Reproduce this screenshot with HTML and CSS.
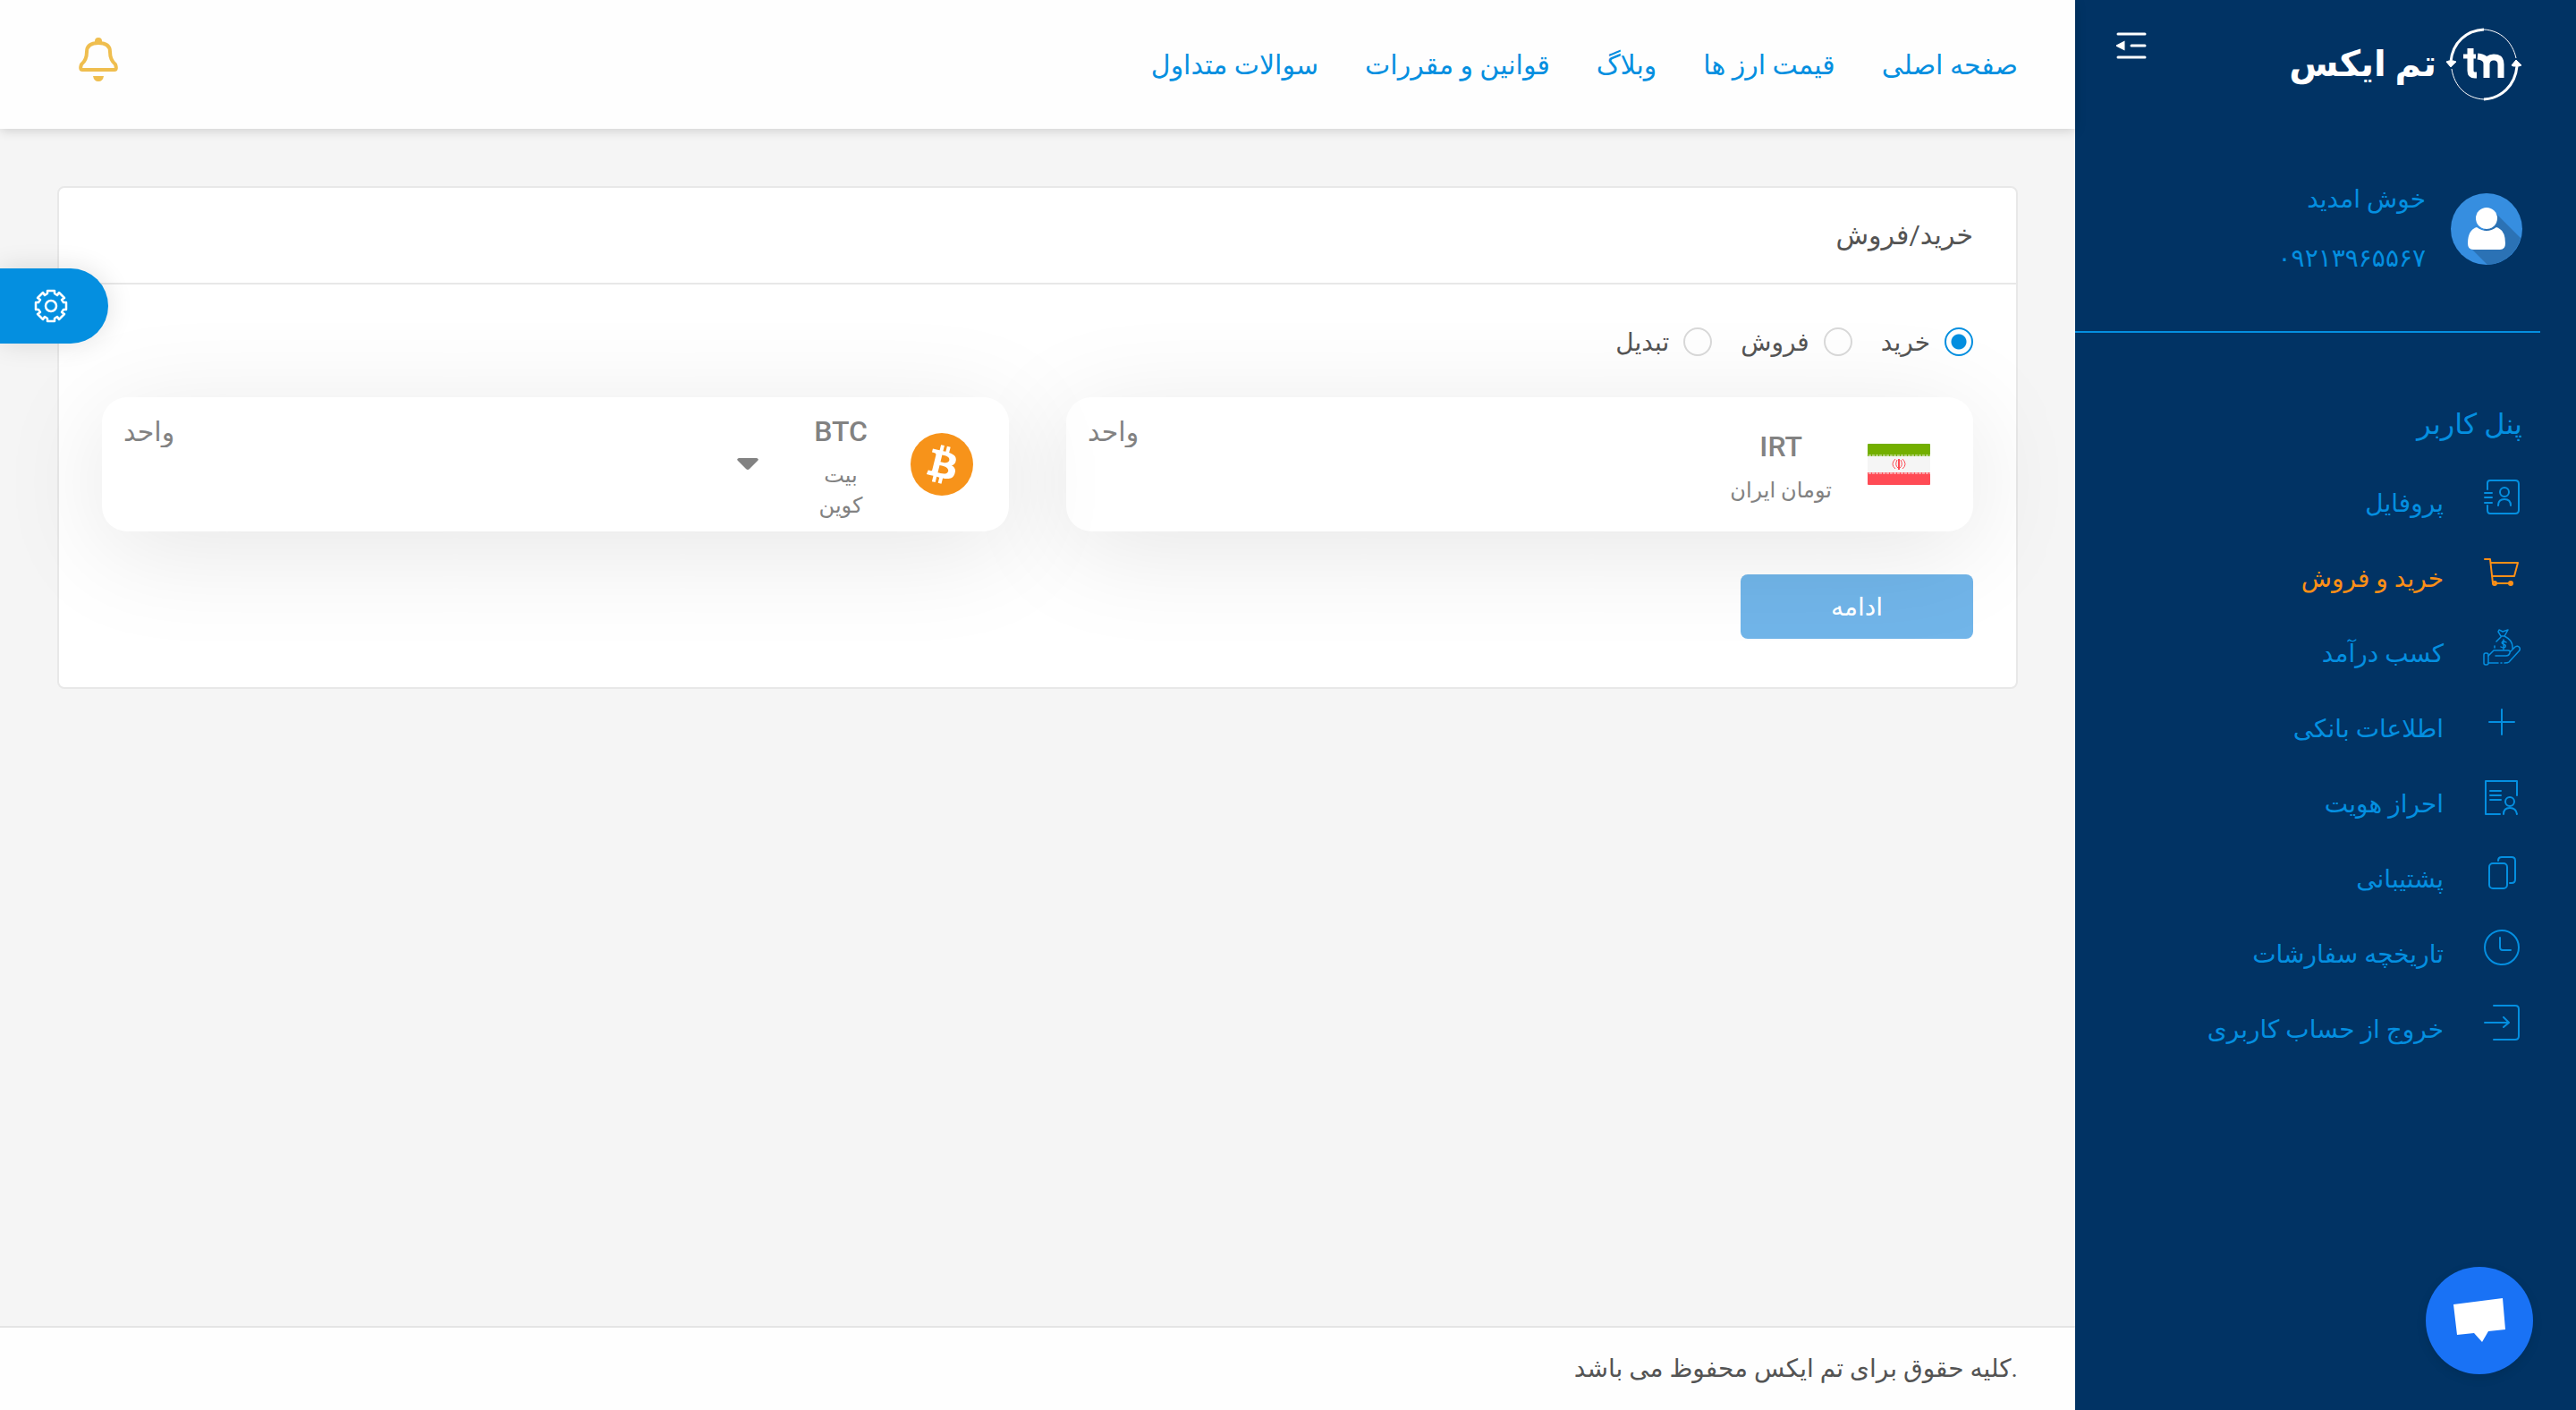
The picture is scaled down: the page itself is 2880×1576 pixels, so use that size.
FILE: index.html
```html
<!DOCTYPE html>
<html lang="fa" dir="rtl">
<head>
<meta charset="utf-8">
<title>تم ایکس</title>
<link rel="stylesheet" href="styles.css">
</head>
<body>
<div class="app">
  <aside class="sidebar">
    <div class="brand">
      <a class="logo" href="#" aria-label="تم ایکس">
        <svg class="logo-mark" viewBox="0 0 86 82" fill="none" stroke="#fff">
          <path d="M6 38C8 16 24 3 43 2" stroke-width="3"/>
          <path d="M43 2C62 3 75 16 79 34" stroke-width="1"/>
          <path d="M80 43C78 65 62 79 43 80" stroke-width="3"/>
          <path d="M43 80C24 79 10 66 7 46" stroke-width="1"/>
          <path d="M1 38L6 44L12 38L9 37L4 37ZM74 42L79 36L85 42L82 43L76 43Z" fill="#fff" stroke-linejoin="round"/>
          <path d="M28 23V48Q28 53 33 53H35" stroke-width="7"/>
          <path d="M20 32H34" stroke-width="5"/>
          <path d="M46 56V40Q46 33 36 32M46 40Q47 33 54 33Q62 33 62 41V56" stroke-width="7"/>
        </svg>
        <span>تم ایکس</span>
      </a>
      <button class="menu-toggle" aria-label="بستن منو">
        <svg viewBox="0 0 34 30" fill="none" stroke="#fff" stroke-width="3" stroke-linecap="round"><path d="M2 2H32M17 15H32M2 28H32"/><path d="M2 15L8 12V18Z" fill="#fff"/></svg>
      </button>
    </div>
    <div class="user">
      <svg class="avatar" viewBox="0 0 80 80">
        <circle cx="40" cy="40" r="40" fill="#368ee0"/>
        <path d="M50 22L78 50A40 40 0 0 1 41 80L23 62Z" fill="#2b72b5"/>
        <circle cx="40" cy="28" r="12" fill="#fff"/>
        <path d="M29 38Q40 46 51 38Q61 41 61 56Q61 63 55 63H25Q19 63 19 56Q19 41 29 38Z" fill="#fff"/>
      </svg>
      <div class="user-text"><p>خوش امدید</p><p>۰۹۲۱۳۹۶۵۵۶۷</p></div>
    </div>
    <h2 class="panel-title">پنل کاربر</h2>
    <nav class="menu">
      <a href="#"><svg viewBox="0 0 42 42"><path d="M5 13V6Q5 3 8 3H36Q40 3 40 7V36Q40 40 36 40H8Q5 40 5 36V31M2 17H10M2 22H10M2 28H10M17 31Q17 24 24 24T31 31"/><circle cx="24" cy="16" r="5"/></svg><span>پروفایل</span></a>
      <a href="#" class="active"><svg viewBox="0 0 42 42"><path d="M2 7H8L11 34M9 11H39L35 26H10M13 34H32"/><circle cx="13" cy="34" r="2"/><circle cx="31" cy="34" r="2"/></svg><span>خرید و فروش</span></a>
      <a href="#"><svg class="thin" viewBox="0 0 42 42"><rect x="1" y="28" width="5" height="13" rx="2"/><path d="M6 31L12 25H28Q31 25 30 28Q29 31 26 31H14M30 27L36 21Q39 19 41 22Q42 24 40 26L29 38Q28 39 24 39M17 39H6M20 39H21M13 22V20M15 15L20 10M20 9L17 4L18 2L22 4L28 2L24 9H20M24 9Q34 14 33 23"/><path d="M26 16Q24 14 22 15Q20 17 23 18Q26 19 25 21Q23 23 20 21M23 13V24"/></svg><span>کسب درآمد</span></a>
      <a href="#"><svg viewBox="0 0 42 42"><path d="M7 21H35M21 7V35"/></svg><span>اطلاعات بانکی</span></a>
      <a href="#"><svg viewBox="0 0 42 42"><path d="M38 19V3H3V40H19M8 14H20M8 19H20M8 24H20M23 40Q23 33 30 33T38 40"/><circle cx="30" cy="26" r="5"/></svg><span>احراز هویت</span></a>
      <a href="#"><svg viewBox="0 0 42 42"><rect x="7" y="11" width="20" height="28" rx="4"/><path d="M17 8Q17 4 21 4H32Q36 4 36 8V29Q36 33 32 33H30"/></svg><span>پشتیبانی</span></a>
      <a href="#"><svg viewBox="0 0 42 42"><circle cx="21" cy="21" r="19"/><path d="M19 10V21Q19 24 22 24H31"/></svg><span>تاریخچه سفارشات</span></a>
      <a href="#"><svg viewBox="0 0 42 42"><path d="M12 2H36Q40 2 40 6V36Q40 40 36 40H12M2 21H28M23 15L29 21L23 26"/></svg><span>خروج از حساب کاربری</span></a>
    </nav>
  </aside>

  <div class="page">
    <header class="topbar">
      <nav class="topnav">
        <a href="#">صفحه اصلی</a><a href="#">قیمت ارز ها</a><a href="#">وبلاگ</a><a href="#">قوانین و مقررات</a><a href="#">سوالات متداول</a>
      </nav>
      <button class="bell" aria-label="اعلان‌ها">
        <svg viewBox="0 0 44 50"><path d="M3 30Q9 25 9 16Q9 6 22 6T35 16Q35 25 41 30Q43 36 40 36H4Q1 36 3 30Z" fill="none" stroke="#efbe4f" stroke-width="4" stroke-linejoin="round"/><circle cx="22" cy="4" r="4" fill="#efbe4f"/><path d="M16 43H28Q27 49 22 49T16 43Z" fill="#efbe4f"/></svg>
      </button>
    </header>

    <main class="content">
      <section class="card">
        <h1 class="card-title">خرید/فروش</h1>
        <form class="card-body">
          <div class="modes">
            <label><input type="radio" name="mode" checked><span>خرید</span></label>
            <label><input type="radio" name="mode"><span>فروش</span></label>
            <label><input type="radio" name="mode"><span>تبدیل</span></label>
          </div>
          <div class="pair">
            <div class="box box-irt">
              <svg class="flag" viewBox="0 0 70 46"><rect width="70" height="46" rx="1" fill="#f5f5f5"/><path d="M0 1Q0 0 1 0H69Q70 0 70 1V14H0Z" fill="#73af00"/><path d="M0 32H70V45Q70 46 69 46H1Q0 46 0 45Z" fill="#ff4b55"/><path d="M1 13H70" stroke="#f5f5f5" stroke-dasharray="3 1"/><path d="M1 33H70" stroke="#f5f5f5" stroke-dasharray="3 1"/><path d="M31 17Q25 23 31 28M39 17Q45 23 39 28M33 18Q30 24 34 27M37 18Q40 24 36 27" fill="none" stroke="#ff4b55"/><path d="M35 17V29" stroke="#ff4b55" stroke-width="2"/></svg>
              <div class="coin"><strong>IRT</strong><span>تومان ایران</span></div>
              <input class="amount" type="text" placeholder="واحد" aria-label="مقدار تومان">
            </div>
            <div class="box box-btc">
              <svg class="btc" viewBox="0 0 32 32"><circle cx="16" cy="16" r="16" fill="#f7931a"/><path fill="#fff" d="M23.189 14.02c.314-2.096-1.283-3.223-3.465-3.975l.708-2.84-1.728-.43-.69 2.765c-.454-.114-.92-.22-1.385-.326l.695-2.783L15.596 6l-.708 2.839c-.376-.086-.746-.17-1.104-.26l.002-.009-2.384-.595-.46 1.846s1.283.294 1.256.312c.7.175.826.638.805 1.006l-.806 3.235c.048.012.11.03.18.057l-.183-.045-1.13 4.532c-.086.212-.303.531-.793.41.018.025-1.256-.313-1.256-.313l-.858 1.978 2.25.561c.418.105.828.215 1.231.318l-.715 2.872 1.727.43.708-2.84c.472.127.93.245 1.378.357l-.706 2.828 1.728.43.715-2.866c2.948.558 5.164.333 6.097-2.333.752-2.146-.037-3.385-1.588-4.192 1.13-.26 1.98-1.003 2.207-2.538zm-3.95 5.538c-.533 2.147-4.148.986-5.32.695l.95-3.805c1.172.293 4.929.872 4.37 3.11zm.535-5.569c-.487 1.953-3.495.96-4.47.717l.86-3.45c.975.243 4.118.696 3.61 2.733z"/></svg>
              <div class="coin"><strong>BTC</strong><span>بیت<br>کوین</span></div>
              <button type="button" class="pick" aria-label="انتخاب ارز"><svg viewBox="0 0 24 14"><path d="M2 0H22Q25 1 23 3L14 12Q12 14 10 12L1 3Q-1 1 2 0Z" fill="#828282"/></svg></button>
              <input class="amount" type="text" placeholder="واحد" aria-label="مقدار بیت کوین">
            </div>
          </div>
          <button type="submit" class="submit">ادامه</button>
        </form>
      </section>
    </main>

    <footer class="footer" dir="ltr">کلیه حقوق برای تم ایکس محفوظ می باشد.</footer>
  </div>
</div>

<button class="settings" aria-label="تنظیمات">
  <svg viewBox="-19 -19 38 38" fill="none" stroke="#fff" stroke-width="2.5" stroke-linejoin="round"><path d="M-4 -14V-17H4V-14L7 -12L9 -15L15 -9L12 -7L14 -4H17V4H14L12 7L15 9L9 15L7 12L4 14V17H-4V14L-7 12L-9 15L-15 9L-12 7L-14 4H-17V-4H-14L-12 -7L-15 -9L-9 -15L-7 -12Z"/><circle r="6"/></svg>
</button>
<button class="chat" aria-label="گفتگو">
  <svg viewBox="0 0 58 50"><path d="M0 7L55 0L58 35L39 37L32 49L23 39L4 41Z" fill="#fff"/></svg>
</button>
</body>
</html>
```
FILE: styles.css
```css
* { box-sizing: border-box; margin: 0; }
body { font-family: Roboto, "DejaVu Sans", sans-serif; font-size: 28px; color: #545454; background: #f5f5f5; }
a { color: inherit; text-decoration: none; }
button { border: 0; padding: 0; background: none; font: inherit; cursor: pointer; }
svg { display: block; flex: none; }

.app { display: flex; min-height: 100vh; }

.sidebar { flex: 0 0 560px; background: #013364; color: #048fe0; }
.brand { display: flex; justify-content: space-between; align-items: flex-start; height: 144px; padding: 31px 60px 0 80px; }
.logo { display: flex; align-items: center; gap: 10px; color: #fff; font-size: 40px; font-weight: 700; line-height: 82px; }
.logo-mark { width: 86px; height: 82px; }
.menu-toggle { margin-top: 5px; margin-inline-end: -34px; }
.menu-toggle svg { width: 34px; height: 30px; }
.user { display: flex; align-items: center; gap: 28px; height: 228px; margin-inline-start: 40px; padding: 0 20px 2px 0; border-bottom: 2px solid #048fe0; }
.avatar { width: 80px; height: 80px; }
.user-text { line-height: 66px; }
.panel-title { padding: 72px 60px 0 0; font-size: 32px; font-weight: 400; line-height: 60px; }
.menu { display: flex; flex-direction: column; padding: 9px 62px 0 0; }
.menu a { display: flex; align-items: center; gap: 44px; height: 84px; }
.menu svg { width: 42px; height: 42px; fill: none; stroke: currentColor; stroke-width: 2; stroke-linecap: round; stroke-linejoin: round; }
.menu .thin { stroke-width: 1.5; }
.menu span { padding-top: 14px; }
.menu .active { color: #ff9016; }

.page { flex: 1; display: flex; flex-direction: column; min-width: 0; }
.topbar { display: flex; align-items: center; justify-content: space-between; height: 144px; padding: 0 64px 0 88px; background: #fefefe; box-shadow: 0 2px 12px rgba(0, 0, 0, .16); }
.topnav { display: flex; gap: 52px; color: #048fe0; font-size: 30px; }
.bell { margin-bottom: 10px; }
.bell svg { width: 44px; height: 50px; }

.content { flex: 1; padding: 64px; }
.card { background: #fff; border: 2px solid #e8e8e8; border-radius: 8px; }
.card-title { padding: 0 48px; border-bottom: 2px solid #e8e8e8; font-size: 30px; font-weight: 400; line-height: 106px; }
.card-body { padding: 40px 48px 54px; }
.modes { display: flex; gap: 32px; height: 48px; align-items: center; }
.modes label { display: flex; align-items: center; gap: 16px; }
.modes input { appearance: none; width: 32px; height: 32px; margin: 0; border: 2px solid #d9d9d9; border-radius: 50%; background: #fff; }
.modes input:checked { border-color: #048fe0; background: radial-gradient(circle, #048fe0 8px, #fff 9px); }
.pair { display: grid; grid-template-columns: 1fr 1fr; gap: 64px; margin-top: 38px; }
.box { display: flex; align-items: center; height: 150px; padding: 0 48px 0 24px; border-radius: 28px; background: #fff; box-shadow: 0 20px 120px rgba(0, 0, 0, .1); color: #828282; }
.box-btc { padding-right: 40px; }
.flag { width: 70px; height: 46px; }
.btc { width: 70px; height: 70px; }
.coin { display: flex; flex-direction: column; align-items: center; gap: 6px; text-align: center; }
.coin strong { font-size: 32px; font-weight: 500; line-height: 52px; }
.coin span { font-size: 24px; line-height: 34px; }
.box-irt .coin { margin-right: 40px; }
.box-btc .coin { width: 60px; margin-right: 48px; }
.pick { margin-right: 62px; }
.pick svg { width: 24px; height: 14px; }
.amount { flex: 1; min-width: 0; align-self: flex-start; height: 76px; padding: 0; border: 0; outline: 0; background: none; font: inherit; font-size: 30px; text-align: left; }
.amount::placeholder { color: #828282; opacity: 1; }
.submit { display: block; width: 260px; height: 72px; margin-top: 48px; border-radius: 8px; background: #71b5e9; color: #fff; }

.footer { height: 94px; padding: 0 64px; border-top: 2px solid #e4e4e4; background: #fefefe; line-height: 92px; text-align: right; }

.settings { position: fixed; left: 0; top: 300px; display: flex; align-items: center; width: 121px; height: 84px; padding-left: 38px; border-radius: 0 42px 42px 0; background: #048fe0; box-shadow: 0 0 30px rgba(0, 0, 0, .12); direction: ltr; }
.settings svg { width: 38px; height: 38px; }
.chat { position: fixed; right: 48px; bottom: 40px; display: grid; place-items: center; width: 120px; height: 120px; border-radius: 50%; background: #1972f5; box-shadow: 0 4px 12px rgba(0, 0, 0, .1); }
.chat svg { width: 58px; height: 50px; }
```
